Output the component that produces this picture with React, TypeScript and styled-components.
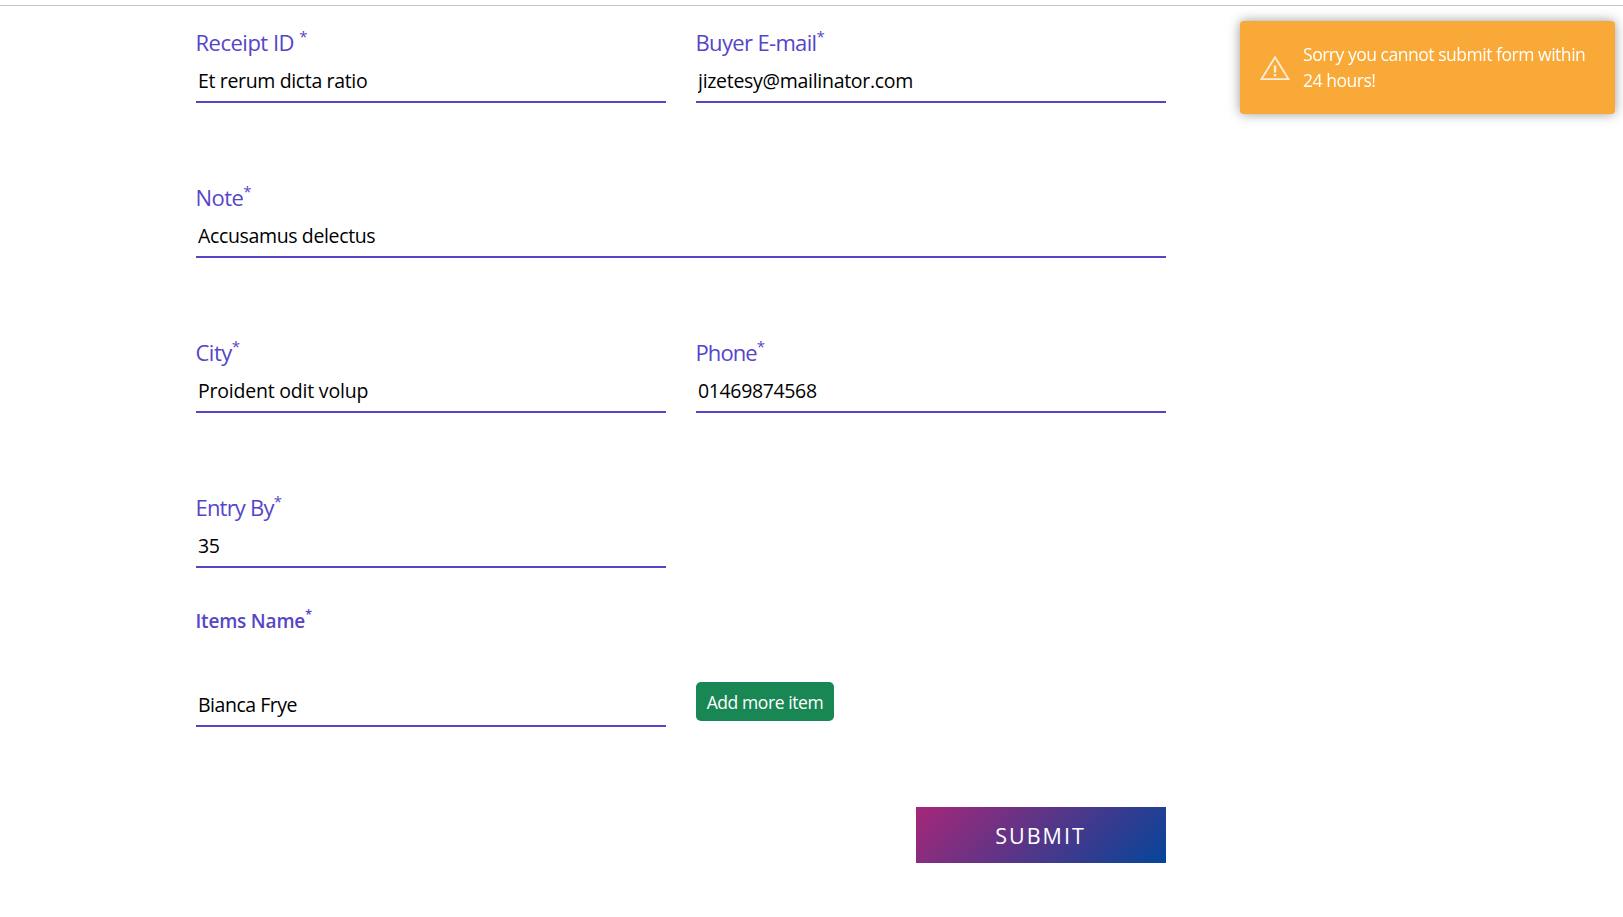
import React from "react";
import styled, { createGlobalStyle } from "styled-components";

const GlobalStyle = createGlobalStyle`
  *, *::before, *::after { box-sizing: border-box; }
  body {
    margin: 0;
    background: #fff;
    color: #000;
    font-family: "Segoe UI", "Open Sans", "Noto Sans", sans-serif;
    overflow: hidden;
  }
`;

const Page = styled.main`
  height: 917px;
  padding-top: 5px;
`;

const Divider = styled.hr`
  height: 1px;
  margin: 0;
  border: 0;
  background: #c8c8c8;
`;

const Form = styled.form`
  width: 970px;
  margin: 21px 0 0 196px;
`;

const Row = styled.div`
  display: grid;
  grid-template-columns: repeat(2, 470px);
  column-gap: 30px;
  height: 76px;
  margin-bottom: 79px;

  &:last-of-type { margin-bottom: 0; }
`;

const Field = styled.div<{ $wide?: boolean }>`
  grid-column: ${(p) => (p.$wide ? "1 / -1" : "auto")};
  display: flex;
  flex-direction: column;
`;

const Label = styled.label<{ $spacing: number }>`
  height: 30px;
  line-height: 30px;
  margin-left: -0.5px;
  font-size: 22px;
  letter-spacing: ${(p) => p.$spacing}px;
  color: #5546c8;
  white-space: pre;
`;

const Star = styled.sup`
  font-size: 15px;
  line-height: 0;
  vertical-align: 9px;
  letter-spacing: 0;
  font-weight: 400;
`;

const Input = styled.input<{ $spacing: number }>`
  width: 100%;
  height: 46px;
  padding: 3px 2px 0;
  border: 0;
  border-bottom: 2px solid #5546c8;
  border-radius: 0;
  background: transparent;
  outline: none;
  color: #000;
  font-family: inherit;
  font-size: 19.5px;
  letter-spacing: ${(p) => p.$spacing}px;
`;

const ItemsTitle = styled.h2`
  margin: 38px 0 45px -0.5px;
  height: 30px;
  line-height: 30px;
  font-size: 19px;
  font-weight: 600;
  letter-spacing: -0.2px;
  color: #5546c8;

  ${Star} {
    font-size: 13px;
    font-weight: 600;
  }
`;

const ItemsRow = styled.div`
  display: flex;
  gap: 30px;
  align-items: flex-start;
  height: 46px;
`;

const ItemBox = styled.div`
  width: 470px;
`;

const AddButton = styled.button`
  width: 138px;
  height: 39px;
  margin-top: 1px;
  padding: 0;
  border: 0;
  border-radius: 5px;
  background: #198754;
  color: #fff;
  font-family: inherit;
  font-size: 17.5px;
  letter-spacing: -0.41px;
  white-space: nowrap;
`;

const Actions = styled.div`
  display: flex;
  justify-content: flex-end;
  margin-top: 80px;
`;

const SubmitButton = styled.button`
  width: 250px;
  height: 56px;
  padding: 0 1px 0 0;
  border: 0;
  background: linear-gradient(135deg, #a62778 0%, #04459a 100%);
  color: #fff;
  font-family: inherit;
  font-size: 21.5px;
  font-weight: 500;
  letter-spacing: 2px;
`;

const Toast = styled.aside`
  position: fixed;
  top: 21px;
  right: 8px;
  display: flex;
  align-items: center;
  width: 375px;
  height: 93px;
  padding-left: 20px;
  border-radius: 4px;
  background: #f9a937;
  box-shadow: 0 0 12px #999;
  color: #fff;
`;

const ToastIcon = styled.svg`
  flex: none;
  width: 30px;
  height: 26px;
  margin-right: 13px;
`;

const ToastText = styled.p`
  margin: 0 0 1px;
  font-size: 17.5px;
  line-height: 26px;
  letter-spacing: -0.47px;
  white-space: nowrap;
`;

type FieldProps = {
  id: string;
  label: string;
  value: string;
  labelSpacing?: number;
  valueSpacing?: number;
  wide?: boolean;
};

function TextField({ id, label, value, labelSpacing = 0, valueSpacing = 0, wide }: FieldProps) {
  return (
    <Field $wide={wide}>
      <Label htmlFor={id} $spacing={labelSpacing}>
        {label}
        <Star>*</Star>
      </Label>
      <Input id={id} defaultValue={value} $spacing={valueSpacing} spellCheck={false} />
    </Field>
  );
}

export default function App() {
  return (
    <Page>
      <GlobalStyle />
      <Divider />
      <Form onSubmit={(e) => e.preventDefault()}>
        <div>
          <Row>
            <TextField id="receipt" label="Receipt ID " value="Et rerum dicta ratio" labelSpacing={-0.5} valueSpacing={-0.35} />
            <TextField id="email" label="Buyer E-mail" value="jizetesy@mailinator.com" labelSpacing={-0.65} valueSpacing={-0.29} />
          </Row>
          <Row>
            <TextField id="note" label="Note" value="Accusamus delectus" labelSpacing={-0.55} valueSpacing={-0.36} wide />
          </Row>
          <Row>
            <TextField id="city" label="City" value="Proident odit volup" labelSpacing={-0.5} valueSpacing={-0.21} />
            <TextField id="phone" label="Phone" value="01469874568" labelSpacing={-0.9} valueSpacing={-0.36} />
          </Row>
          <Row>
            <TextField id="entry" label="Entry By" value="35" labelSpacing={-0.8} valueSpacing={-0.3} />
          </Row>
        </div>
        <ItemsTitle>
          Items Name<Star>*</Star>
        </ItemsTitle>
        <ItemsRow>
          <ItemBox>
            <Input aria-label="Item name" defaultValue="Bianca Frye" $spacing={-0.48} spellCheck={false} />
          </ItemBox>
          <AddButton type="button">Add more item</AddButton>
        </ItemsRow>
        <Actions>
          <SubmitButton type="submit">SUBMIT</SubmitButton>
        </Actions>
      </Form>
      <Toast role="alert">
        <ToastIcon viewBox="0 0 30 26" fill="none" stroke="#fff" strokeOpacity="0.8">
          <path d="M15 2.2 28.6 24.2H1.4Z" strokeWidth="1.8" />
          <path d="M15 10.5v7M15 19v2.4" strokeWidth="2.4" />
        </ToastIcon>
        <ToastText>
          Sorry you cannot submit form within
          <br />
          24 hours!
        </ToastText>
      </Toast>
    </Page>
  );
}
